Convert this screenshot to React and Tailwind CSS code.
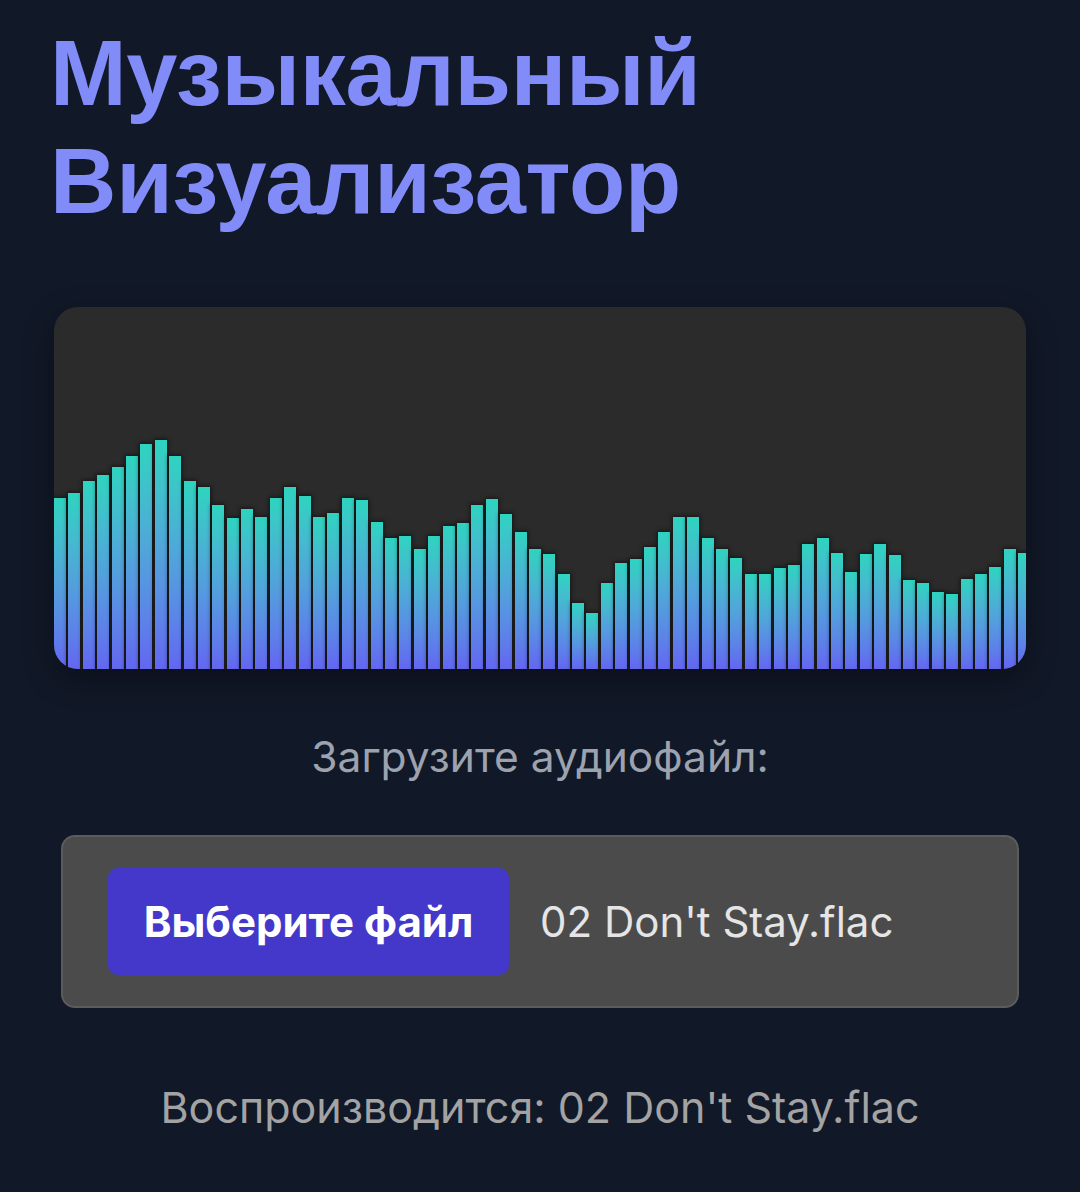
import { useState } from 'react'

// высоты столбиков спектра (px), сняты с кадра
const BARS = [
  171, 176, 188, 194, 202, 213, 225, 229, 213, 188, 182, 164, 151, 160, 152, 171, 182,
  173, 152, 156, 171, 169, 147, 131, 133, 120, 133, 143, 146, 164, 170, 155, 137, 120,
  115, 95, 66, 56, 86, 106, 110, 122, 137, 152, 152, 131, 120, 111, 95, 95, 101, 104,
  125, 131, 116, 97, 115, 125, 114, 89, 86, 77, 75, 90, 95, 102, 120, 116,
]

function Visualizer({ bars }) {
  return (
    <div className="flex h-[362px] items-end gap-[2.4px] overflow-hidden rounded-3xl
      bg-[#2b2b2b] shadow-[0_10px_30px_rgba(0,0,0,0.35)]">
      {bars.map((h, i) => (
        <div key={i}
          className="w-[12px] flex-none bg-gradient-to-b from-[#2dd4bf] to-[#6366f1]
            shadow-[0_0_4px_1px_rgba(0,0,0,0.55)]"
          style={{ height: h }} />
      ))}
    </div>
  )
}

export default function App() {
  const [file] = useState("02 Don't Stay.flac")
  return (
    <div className="min-h-[1192px] bg-[#111827] px-[54px] pt-[19px]
      font-['Inter','Noto_Sans',sans-serif]">
      <h1 className="-ml-[4px] font-['Liberation_Sans',Arial,sans-serif] text-[92px]
        font-bold leading-[108px] tracking-[-0.3px] text-[#818cf8]">
        Музыкальный<br />Визуализатор
      </h1>

      <div className="mt-[72px]">
        <Visualizer bars={BARS} />
      </div>

      <p className="mt-[63px] text-center text-[42.5px] leading-[50px] text-[#9ca3af]">
        Загрузите аудиофайл:
      </p>

      <div className="mx-[7px] mt-[53px] flex h-[173px] items-center rounded-[14px] border-2
        border-[#5c5c5c] bg-[#4b4b4b] pl-[45px]">
        <label className="flex h-[107px] w-[401px] items-center justify-center rounded-[10px]
          bg-[#4338ca] text-[42px] font-bold text-white">
          Выберите файл
        </label>
        <span className="ml-[31px] text-[42px] text-[#e5e5e5]">{file}</span>
      </div>

      <p className="mt-[74px] text-center text-[43px] leading-[50px] text-[#a3a3a3]">
        Воспроизводится: {file}
      </p>
    </div>
  )
}
